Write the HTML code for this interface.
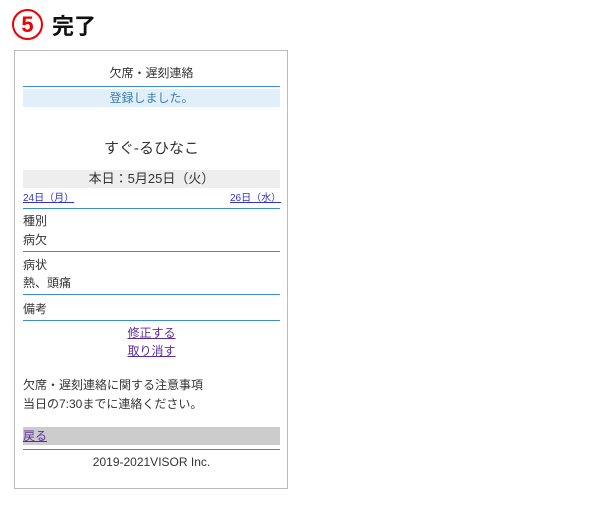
<!DOCTYPE html>
<html><head><meta charset="utf-8"><style>
body{margin:0;width:600px;height:506px;background:#fff;font-family:"Liberation Sans","Noto Sans CJK JP",sans-serif;color:#333;position:relative;overflow:hidden}
.a{position:absolute}
.c{left:23px;width:257px;text-align:center}
.t{font-size:12px}
.line{position:absolute;left:23px;width:257px;height:1px;background:#3a8fcb}
a{color:#5a2d9e;text-decoration:underline}
</style></head><body>
<div class="a" style="left:12px;top:9px;width:27px;height:27px;border:2px solid #e00;border-radius:50%;color:#e00;font-size:22px;font-weight:bold;text-align:center;line-height:27px">5</div>
<div class="a" style="left:52px;top:9px;font-size:22px;font-weight:bold;color:#111">完了</div>
<div class="a" style="left:14px;top:50px;width:272px;height:437px;border:1px solid #bbb"></div>
<div class="a c t" style="top:64px">欠席・遅刻連絡</div>
<div class="line" style="top:86px"></div>
<div class="a c t" style="top:89px;height:18px;line-height:18px;background:#e1effa;color:#3a7fb0">登録しました。</div>
<div class="a c" style="top:137px;font-size:15px">すぐ-るひなこ</div>
<div class="a c" style="top:170px;height:18px;line-height:18px;background:#eee;font-size:13px">本日：5月25日（火）</div>
<div class="a" style="left:23px;top:189px;font-size:10px"><a style="color:#33c">24日（月）</a></div>
<div class="a" style="left:230px;top:189px;font-size:10px"><a style="color:#33c">26日（水）</a></div>
<div class="line" style="top:208px"></div>
<div class="a t" style="left:23px;top:212px">種別</div>
<div class="a t" style="left:23px;top:231px">病欠</div>
<div class="line" style="top:251px"></div>
<div class="a t" style="left:23px;top:256px">病状</div>
<div class="a t" style="left:23px;top:274px">熱、頭痛</div>
<div class="line" style="top:294px"></div>
<div class="a t" style="left:23px;top:300px">備考</div>
<div class="line" style="top:320px"></div>
<div class="a c t" style="top:324px"><a>修正する</a></div>
<div class="a c t" style="top:342px"><a>取り消す</a></div>
<div class="a t" style="left:23px;top:376px">欠席・遅刻連絡に関する注意事項</div>
<div class="a t" style="left:23px;top:395px">当日の7:30までに連絡ください。</div>
<div class="a t" style="left:23px;top:427px;width:257px;height:18px;line-height:18px;background:#ccc"><a>戻る</a></div>
<div class="line" style="top:449px"></div>
<div class="a c t" style="top:455px">2019-2021VISOR Inc.</div>
</body></html>
